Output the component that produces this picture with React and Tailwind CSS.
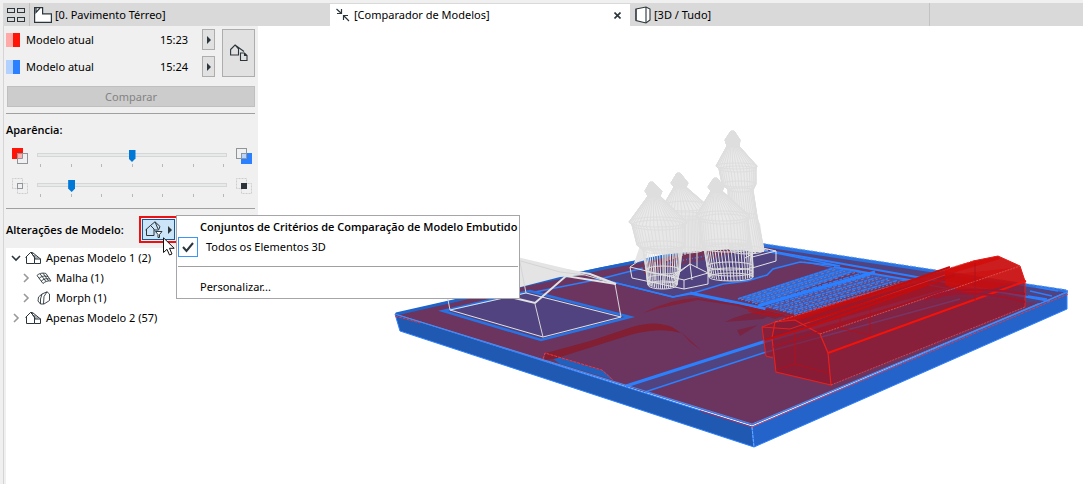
import React, { useState } from 'react';

const ink = '#2b363c';

function GridIcon() {
  return (
    <svg width="18" height="14" viewBox="0 0 18 14" fill="none" stroke={ink}>
      <rect x="0.5" y="0.5" width="7" height="4" />
      <rect x="10.5" y="0.5" width="7" height="4" />
      <rect x="0.5" y="9.5" width="7" height="4" />
      <rect x="10.5" y="9.5" width="7" height="4" />
    </svg>
  );
}

function PlanIcon() {
  return (
    <svg width="18" height="16" viewBox="0 0 18 16" fill="#fff" stroke={ink} strokeWidth="1.2">
      <path d="M0.6 0.6h8v6.2h8.8v8.6H0.6z" />
      <path d="M2 1v4.5L6 1" fill="none" />
    </svg>
  );
}

function CompareIcon() {
  return (
    <svg width="14" height="14" viewBox="0 0 14 14" fill="none" stroke={ink} strokeWidth="1.2">
      <path d="M0.5 1l5 4.500M5.500 1v4.500H1M13 13l-5-5M7.500 12V7.500H12" />
    </svg>
  );
}

function CubeIcon() {
  return (
    <svg width="16" height="18" viewBox="0 0 16 18" fill="#fff" stroke={ink} strokeWidth="1.1">
      <path d="M1 3L11 1l4 2v11l-4 3L1 14.500z" />
      <path d="M11 1v16M1 3v11.500" fill="none" />
    </svg>
  );
}

function SwapIcon() {
  return (
    <svg width="18" height="18" viewBox="0 0 18 18" fill="none" stroke={ink} strokeWidth="1.1">
      <path d="M0.600 5.500L5 1l3.500 4v6H0.600zM5 1l9 6.500" />
      <path d="M10.500 9h4l2.500 2.500v5h-6.500zM14.500 9v2.500H17" />
    </svg>
  );
}

function HouseIcon() {
  return (
    <svg width="17" height="14" viewBox="0 0 17 14" fill="none" stroke={ink}>
      <path d="M0.500 6.500L5.500 1.500L9.500 5.500V12.500H1.500V6M5.500 1.500H7.500L15.500 8M15.500 8V12.500H9.500M9.500 8H16" />
      <path d="M7.500 2v2l3 4M10 4v3M12 5.500v2" strokeWidth="0.8" />
    </svg>
  );
}

function MeshIcon() {
  return (
    <svg width="16" height="13" viewBox="0 0 16 13" fill="none" stroke={ink} strokeWidth="0.9">
      <path d="M1 3.500C4 0.500 8 1 10 1.500L15 9C12 8.500 9 9.500 7 11.500z" />
      <path d="M3 6.500C6 3.500 9 4 12 4.500M5 9.500C8 6.500 10 6.500 13.500 7M4 1.800L10 9.500M7 1.200L12.500 8.800" />
    </svg>
  );
}

function MorphIcon() {
  return (
    <svg width="14" height="14" viewBox="0 0 14 14" fill="none" stroke={ink}>
      <path d="M10 0.800L5 3L1.500 6L1 10L3.500 13L7 13L12.500 9.500V3zM10 0.800L7 5.500L6.500 13M5 3L3.500 8L3.500 13" strokeWidth="0.9" />
    </svg>
  );
}

function FilterIcon() {
  return (
    <svg width="18" height="17" viewBox="0 0 18 17" fill="none" stroke={ink}>
      <path d="M1.500 8V14.500H9V8L5.500 4.500L0.500 9M5.500 4.500L10 0.800L15 5.500L13.500 9H9M10 0.800L13 8M5.500 4.500L9 8" />
      <path d="M10.500 10.500h6.500l-2.500 3v3h-1.500v-3z" fill="#fff" />
    </svg>
  );
}

function Chevron({ open }) {
  return (
    <svg width="10" height="10" viewBox="0 0 10 10" fill="none" stroke={open ? ink : '#999'} strokeWidth="1.600">
      <path d={open ? 'M1 3l4 4l4-4' : 'M3 1l4 4l-4 4'} />
    </svg>
  );
}

function Arrow() {
  return (
    <svg width="4" height="8" viewBox="0 0 4 8" fill={ink}>
      <path d="M0 0l4 4l-4 4z" />
    </svg>
  );
}

function OverlapIcon({ first, second }) {
  return (
    <svg width="16" height="16" viewBox="0 0 16 16" fill="none" stroke="#90959a">
      {first && <path d="M0 0h11v11H0z" fill="#ff1408" stroke="none" />}
      {first && <rect x="5.500" y="5.500" width="10" height="10" fill="#f0f0f0" />}
      {first && <path d="M5.500 5.500h5v5h-5z" fill="#ffb0ac" />}
      {second && <rect x="0.500" y="0.500" width="10" height="10" />}
      {second && <path d="M5 5h11v11H5z" fill="#2b80ff" stroke="none" />}
      {second && <path d="M5.500 5.500h5v5h-5z" fill="#b8d4ff" />}
    </svg>
  );
}

function CoreIcon({ solid }) {
  return (
    <svg width="16" height="16" viewBox="0 0 16 16" fill="none" stroke="#cdcdcd">
      <path d="M0.500 10.500v-10h10v10zM5.500 5.500h10v10h-10z" strokeDasharray="2 1" />
      <rect x="5.500" y="5.500" width="5" height="5" fill={solid ? ink : '#f0f0f0'} stroke={solid ? ink : '#90959a'} />
    </svg>
  );
}

function Slider({ label, initial, left, right }) {
  const [value, setValue] = useState(initial);

  return (
    <div className="flex h-[30px] items-start gap-[9px] pr-[6px] pl-[6px]">
      {left}
      <div className="flex-1">
        <input
          type="range"
          aria-label={label}
          min="0"
          max="6"
          value={value}
          onChange={(e) => setValue(e.target.value)}
          className="block h-[14px] w-full appearance-none bg-transparent [&::-webkit-slider-runnable-track]:h-[4px] [&::-webkit-slider-runnable-track]:border [&::-webkit-slider-runnable-track]:border-[#d6d6d6] [&::-webkit-slider-runnable-track]:bg-[#e7eaea] [&::-webkit-slider-thumb]:-mt-[4px] [&::-webkit-slider-thumb]:h-[12px] [&::-webkit-slider-thumb]:w-[7px] [&::-webkit-slider-thumb]:appearance-none [&::-webkit-slider-thumb]:bg-[#0078d7] [&::-webkit-slider-thumb]:[clip-path:polygon(0_0,100%_0,100%_70%,50%_100%,0_70%)]"
        />
        <div className="mt-[2px] flex justify-between px-[3px]">
          {[0, 1, 2, 3, 4, 5, 6].map((t) => (
            <span key={t} className="h-[3px] w-px bg-[#b8b8b8]" />
          ))}
        </div>
      </div>
      {right}
    </div>
  );
}

function ModelRow({ time, light, dark }) {
  return (
    <div className="flex h-[21px] items-center">
      <span className={`h-[14px] w-[7px] ${light}`} />
      <span className={`h-[14px] w-[7px] ${dark}`} />
      <span className="ml-[6px] flex-1">Modelo atual</span>
      <span className="mr-[14px]">{time}</span>
      <button aria-label="Escolher modelo" className="flex h-[21px] w-[13px] items-center justify-center border border-[#adadad] bg-[#e1e1e1]">
        <Arrow />
      </button>
    </div>
  );
}

function TreeRow({ open, nested, icon, children }) {
  return (
    <button className={`flex h-5 w-full items-center gap-[4px] ${nested ? 'pl-[15px]' : 'pl-[5px]'}`}>
      <Chevron open={open} />
      <span className="flex w-[17px] justify-center">{icon}</span>
      <span>{children}</span>
    </button>
  );
}

// each ring is [left, right, y, depth of the ellipse]
const towers = [
  {
    n: 18,
    rings: [[731, 734, 131, 0], [725, 740, 140, 1], [727, 739, 146, 1], [716, 757, 166, 3], [719, 756, 169, 3], [722, 756, 184, 3], [728, 753, 190, 2], [729, 757, 216, 3], [730, 764, 250, 4]],
    solid: 9,
  },
  {
    n: 18,
    rings: [[677, 680, 173, 0], [671, 688, 183, 1], [674, 686, 187, 1], [663, 708, 206, 5], [665, 706, 216, 4], [667, 703, 250, 3]],
    solid: 5,
  },
  {
    n: 22,
    rings: [[650, 653, 182, 0], [645, 662, 191, 1], [648, 660, 196, 1], [629, 687, 222, 5], [632, 685, 225, 5], [637, 685, 245, 4], [643, 682, 250, 4], [646, 680, 270, 4], [647, 678, 279, 4], [648, 677, 285, 4]],
    solid: 7,
  },
  {
    n: 22,
    rings: [[714, 717, 178, 0], [708, 724, 187, 1], [711, 722, 191, 1], [696, 750, 216, 5], [699, 748, 219, 5], [701, 750, 243, 4], [704, 752, 248, 4], [707, 753, 266, 4], [708, 753, 272, 4], [709, 753, 277, 4]],
    solid: 6,
  },
];

function Tower({ n, rings, solid }) {
  const shape = (count) => {
    const part = rings.slice(0, count);
    const left = part.map((r) => `${r[0]},${r[2]}`);
    const right = part.map((r) => `${r[1]},${r[2]}`).reverse();
    return left.concat(right).join(' ');
  };
  const wires = [];
  for (let i = 0; i <= n; i++) {
    const t = (1 - Math.cos((Math.PI * i) / n)) / 2;
    wires.push(rings.map((r) => `${r[0] + (r[1] - r[0]) * t},${r[2] + r[3] * Math.sin(Math.PI * t)}`).join(' '));
  }

  return (
    <g stroke="#dedede">
      <polygon points={shape(solid)} fill="#e8e8e8" fillOpacity="0.9" />
      <polygon points={shape(3)} fill="#e0e0e0" />
      {wires.map((w, i) => (
        <polyline key={i} points={w} fill="none" />
      ))}
      {rings.map((r, i) => (
        <ellipse key={i} cx={(r[0] + r[1]) / 2} cy={r[2]} rx={(r[1] - r[0]) / 2} ry={r[3]} fill="none" />
      ))}
    </g>
  );
}

function Terrain() {
  return (
    <g>
      <path d="M395 314L400 331L754 447L752 427z" fill="#1f59b2" stroke="#2b80ff" />
      <path d="M752 427L754 447L1067 309V292z" fill="#2464ca" stroke="#2b80ff" />
      <path d="M395 314L520 285L600 268L738 240L1068 291L752 425z" fill="#6b3560" stroke="#2b80ff" />
      <path d="M396 314L520 286L600 269L738 242" fill="none" stroke="#1f63c8" strokeWidth="3" />
      <path d="M600 279L643 268L746 248L781 254L840 266L800 262L773 269L767 275L747 281L723 284L690 294L673 297z" fill="#514280" stroke="#2b80ff" strokeWidth="1.5" />
      <path d="M746 243L1066 291L1040 303L960 287L840 264z" fill="#514280" />
      <path d="M740 242L1066 291" fill="none" stroke="#2873e4" strokeWidth="3" />
      <path d="M740 240L1067 290" fill="none" stroke="#7a9fe0" strokeDasharray="2 2" />
      <path d="M770 251L900 274L1050 301" fill="none" stroke="#2b80ff" strokeWidth="2" />
      <path d="M804 262L900 280L1020 301" fill="none" stroke="#2b80ff" />
      <path d="M1036 287L1058 291M1030 291L1052 296M1028 296L1047 299" stroke="#2b80ff" strokeWidth="1.5" />
      <path d="M643 269L669 262L736 247" stroke="#783451" strokeWidth="11" fill="none" strokeDasharray="2 1" />
      <path d="M520 295L600 279L673 297L690 293" stroke="#2b80ff" strokeWidth="1.5" fill="none" />
    </g>
  );
}

function Gardens() {
  const beds = [0, 1, 2, 3, 4, 5, 6, 7, 8];
  return (
    <g fill="none">
      <path d="M738 298L833 267L860 270L762 304z" fill="#3a66c8" />
      <path d="M764 307L873 273L903 279L795 314z" fill="#51509a" />
      {beds.map((r) => (
        <path
          key={r}
          d={`M${738 + r * 7} ${299 + r * 1.9}L${834 + r * 9} ${268 + r * 1.8}`}
          stroke="#2b80ff"
          strokeWidth="1.500"
          strokeDasharray={r % 2 ? '6 1 3 1' : '4 1'}
        />
      ))}
      {beds.map((r) => (
        <path
          key={r}
          d={`M${741 + r * 7} ${300 + r * 1.9}L${837 + r * 9} ${269 + r * 1.8}`}
          stroke="#8478ac"
          strokeDasharray={r % 2 ? '2 2' : '3 3'}
        />
      ))}
      <g stroke="#2b80ff">
        <path d="M690 293L738 303L766 309" strokeWidth="3" />
        <path d="M758 306L875 272" strokeWidth="3" />
        <path d="M834 267L915 281" strokeWidth="2" />
      </g>
    </g>
  );
}

function Road() {
  return (
    <g>
      <path d="M626 386L763 342L960 286L1040 303L960 297L763 353L645 392z" fill="#514280" />
      <path d="M626 386L763 342L960 286" stroke="#2b80ff" strokeWidth="3" fill="none" />
      <path d="M645 392L763 353L960 299" stroke="#2b80ff" strokeWidth="1.5" fill="none" />
    </g>
  );
}

function Hills() {
  return (
    <g>
      <path d="M545 353L604 371L613 380L560 364z" fill="#2160bd" />
      <path d="M546 353L590 341L632 327Q655 320 672 327L681 333Q667 329 650 331Q640 332 630 335L554 359L544 360z" fill="#821f32" />
      <path d="M681 332L702 351L690 342z" fill="#832239" />
      <path d="M643 313Q670 299 698 298L738 304L785 315L775 319L738 306L698 300L660 308z" fill="#832239" />
      <path d="M725 322Q750 309 775 313L763 319zM737 330L758 325L740 336z" fill="#7a2443" />
      <path d="M543 359L545 353L602 370L613 380" fill="none" stroke="#f33" strokeDasharray="3 1" />
      <path d="M748 311L770 316M748 307L790 318M752 312L800 318M765 309L800 317" stroke="#b81017" />
    </g>
  );
}

function House() {
  return (
    <g fill="none" stroke="#e2e2e2">
      <path d="M443 311L530 291L630 317L541 340z" fill="#514280" stroke="#2873e4" strokeWidth="2.5" />
      <path d="M517 257L572 270L585 275L560 277L517 288z" fill="#e4e4e4" stroke="none" />
      <path d="M450 310L543 337L621 317L526 293z" />
      <path d="M450 310L447 295M543 337L535 304M621 317L615 284M526 293L520 262" stroke="#d5d5d8" />
      <path d="M510 297L535 303L566 276L616 284" strokeWidth="2" />
      <path d="M517 260L560 272L585 275L616 284" stroke="#d4d4d4" />
      <path d="M566 270L590 274L616 284" strokeWidth="2" />
    </g>
  );
}

function Castle() {
  const slits = [];
  for (let x = 664; x <= 708; x += 3) {
    slits.push(`M${x} 213V${262 - (x - 664) / 3}`);
  }

  return (
    <g>
      <path d="M640 245L668 213L704 213L760 245L750 248L690 252L655 254z" fill="#e6e6e6" />
      <path d="M641 243L634 263L646 260zM756 220L760 223L764 252H750z" fill="#e6e6e6" />
      <path d={slits.join('')} stroke="#dedede" />
      {towers.map((t) => (
        <Tower key={t.rings[0][0]} {...t} />
      ))}
      <g fill="none" stroke="#e2e2e2">
        <path d="M630 267L647 255M630 267L632 278L684 289L708 284V273L690 264L672 278M684 289V280L630 267M684 280L708 273M672 276L690 264L692 280" />
        <path d="M745 258L763 248L776 251V261L752 268M752 257L776 251M745 250L768 250" />
        <path d="M655 262V280M664 262V283M690 248V264M680 250V270M697 251V268" />
      </g>
    </g>
  );
}

function RedBuilding() {
  return (
    <g fill="none" stroke="#e8201c">
      <path d="M762 327L775 322L973 261L998 256L1020 266L1025 281V307L831 385L776 372L773 356L766 356z" fill="#93182c" fillOpacity="0.72" stroke="none" />
      <path d="M775 322L973 261L998 256L1000 259L795 320z" fill="#c80f10" fillOpacity="0.8" stroke="none" />
      <path d="M795 320L945 275L1012 268L820 334z" fill="#b0101a" fillOpacity="0.5" stroke="none" />
      <path d="M945 270L973 261L998 256L1020 266L1025 281L970 295L945 285z" fill="#d60b06" fillOpacity="0.75" stroke="none" />
      <path d="M775 322L795 320L820 334L828 353L831 385L776 372L772 338z" fill="#8a1730" fillOpacity="0.4" strokeWidth="1.2" />
      <path d="M762 327L775 322M762 327L766 356L773 358M762 327L790 329L945 275" />
      <path d="M775 322L973 261" stroke="#ee3a34" strokeDasharray="3 1" />
      <path d="M973 261L998 256L1020 266L1025 281V307" />
      <path d="M831 385L1025 307" stroke="#d8404e" strokeDasharray="2 1" />
      <path d="M820 334L1020 266" stroke="#e04a46" strokeDasharray="2 1" />
      <path d="M828 353L1026 281" stroke="#f51208" strokeWidth="2" />
      <path d="M765 340L815 325L955 275M800 319L950 267M810 321L928 283" stroke="#c20d0f" strokeWidth="2" />
      <path d="M773 347L960 285M776 370L795 364V333M795 364L828 373M840 305V328L870 335V309M975 263V300" stroke="#b0101c" />
      <path d="M925 300Q955 283 1025 294M935 298Q965 287 1025 302" stroke="#a3142a" strokeWidth="2" />
    </g>
  );
}

function Scene() {
  return (
    <svg viewBox="258 26 825 458" preserveAspectRatio="xMinYMin meet" className="block w-full" role="img" aria-label="Modelo 3D comparado">
      <Terrain />
      <Road />
      <Gardens />
      <Hills />
      <House />
      <Castle />
      <g fill="none">
        <path d="M395 314L752 424L1068 292" stroke="#5a86e0" />
        <path d="M752 427L1068 294M395 316L420 323" stroke="#ec343c" strokeDasharray="3 1" />
        <path d="M700 411L752 427" stroke="#a52a50" />
        <path d="M752 427L754 447" stroke="#6ba6ff" strokeDasharray="3 1" />
      </g>
      <RedBuilding />
    </svg>
  );
}

function CriteriaMenu() {
  const [checked, setChecked] = useState(true);

  return (
    <div role="menu" className="absolute -top-[2px] left-full z-10 -mt-px w-[344px] border border-[#a6a6aa] bg-white pb-px">
      <p className="h-[22px] pl-[23px] font-['Open_Sans',sans-serif] leading-[22px] font-semibold whitespace-nowrap">
        Conjuntos de Critérios de Comparação de Modelo Embutido
      </p>
      <button
        role="menuitemcheckbox"
        aria-checked={checked}
        onClick={() => setChecked(!checked)}
        className="-mt-px flex h-5 w-full items-center gap-[8px] pl-px"
      >
        <span className="flex size-5 items-center justify-center border border-[#3c96f5]">
          {checked && (
            <svg width="12" height="11" viewBox="0 0 12 11" fill="none" stroke={ink} strokeWidth="2">
              <path d="M1 5l3.500 4L11 1" />
            </svg>
          )}
        </span>
        Todos os Elementos 3D
      </button>
      <hr className="mx-px mt-[9px] mb-[10px] border-[#a0a0a0]" />
      <button role="menuitem" className="block h-5 w-full pl-[23px] text-left">
        Personalizar...
      </button>
    </div>
  );
}

function Sidebar() {
  return (
    <aside className="flex w-[255px] shrink-0 flex-col border-l border-[#d5d5d5] bg-[#f0f0f0] pl-[2px]">
      <div className="flex gap-[7px] pt-[3px] pr-[3px]">
        <div className="flex flex-1 flex-col gap-[6px]">
          <ModelRow time="15:23" light="bg-[#ffaaa8]" dark="bg-[#ff1408]" />
          <ModelRow time="15:24" light="bg-[#b3d1ff]" dark="bg-[#2b80ff]" />
        </div>
        <button aria-label="Trocar modelos" className="flex w-[33px] items-center justify-center border border-[#adadad] bg-[#e1e1e1]">
          <SwapIcon />
        </button>
      </div>
      <button disabled className="mt-[9px] mr-[3px] ml-px h-[21px] border border-[#bfbfbf] bg-[#cccccc] text-[#838383]">
        Comparar
      </button>
      <hr className="mt-[6px] mr-[3px] border-[#a0a0a0]" />
      <h2 className="mt-[6px] h-5 font-['Open_Sans',sans-serif] leading-5 font-semibold">Aparência:</h2>
      <div className="mt-[8px]">
        <Slider label="Cor dos modelos" initial={3} left={<OverlapIcon first />} right={<OverlapIcon second />} />
        <Slider label="Elementos comuns" initial={1} left={<CoreIcon />} right={<CoreIcon solid />} />
      </div>
      <hr className="mr-[3px] border-[#a0a0a0]" />
      <div className="mt-[7px] flex h-[27px] items-center">
        <h2 className="w-[133px] font-['Open_Sans',sans-serif] font-semibold whitespace-nowrap">Alterações de Modelo:</h2>
        <div className="relative border-2 border-[#ee1111]">
          <button
            aria-label="Critérios de comparação"
            aria-haspopup="menu"
            className="m-px flex h-[21px] w-[33px] items-center justify-center gap-[5px] border border-[#0f5b99] bg-[#cce4f7]"
          >
            <FilterIcon />
            <Arrow />
          </button>
          <CriteriaMenu />
          <svg width="12" height="19" viewBox="0 0 12 19" className="absolute top-[19px] left-[22px] z-20" fill="#fff" stroke="#111">
            <path d="M0.500 0.800V15.500L4 12.300L6.500 18L9 17L6.500 11.300H11.200z" />
          </svg>
        </div>
      </div>
      <ul className="mt-[5px] flex-1 bg-white">
        <li>
          <TreeRow open icon={<HouseIcon />}>Apenas Modelo 1 (2)</TreeRow>
          <ul>
            <li><TreeRow nested icon={<MeshIcon />}>Malha (1)</TreeRow></li>
            <li><TreeRow nested icon={<MorphIcon />}>Morph (1)</TreeRow></li>
          </ul>
        </li>
        <li>
          <TreeRow icon={<HouseIcon />}>Apenas Modelo 2 (57)</TreeRow>
        </li>
      </ul>
    </aside>
  );
}

export default function App() {
  return (
    <div className="flex min-h-screen flex-col bg-[#f0f0f0] pt-[3px] font-['Noto_Sans',sans-serif] text-[11px] leading-4 text-black">
      <nav className="ml-[3px] flex h-[23px] bg-[#d9d9d9]">
        <button aria-label="Visão geral das abas" className="flex w-[27px] items-center justify-center border-r border-[#bfbfbf]">
          <GridIcon />
        </button>
        <div className="grid flex-1 grid-cols-3">
          <button className="flex items-center gap-[3px] pl-[4px] whitespace-nowrap">
            <PlanIcon />
            [0. Pavimento Térreo]
          </button>
          <div className="mt-px flex items-center bg-white pr-[8px] pl-[6px]">
            <button className="flex flex-1 items-center gap-[4px] whitespace-nowrap">
              <CompareIcon />
              [Comparador de Modelos]
            </button>
            <button aria-label="Fechar aba" className="flex size-[10px] items-center justify-center">
              <svg width="7" height="7" viewBox="0 0 7 7" stroke={ink} strokeWidth="1.600">
                <path d="M0.500 0.500l6 6M6.500 0.500l-6 6" />
              </svg>
            </button>
          </div>
          <button className="flex items-center gap-[3px] border-r border-[#c2c2c2] pl-[5px] whitespace-nowrap">
            <CubeIcon />
            [3D / Tudo]
          </button>
        </div>
        <span className="w-[153px]" />
      </nav>
      <div className="flex flex-1 pl-[3px]">
        <Sidebar />
        <main className="min-w-0 flex-1 bg-white">
          <Scene />
        </main>
      </div>
    </div>
  );
}
